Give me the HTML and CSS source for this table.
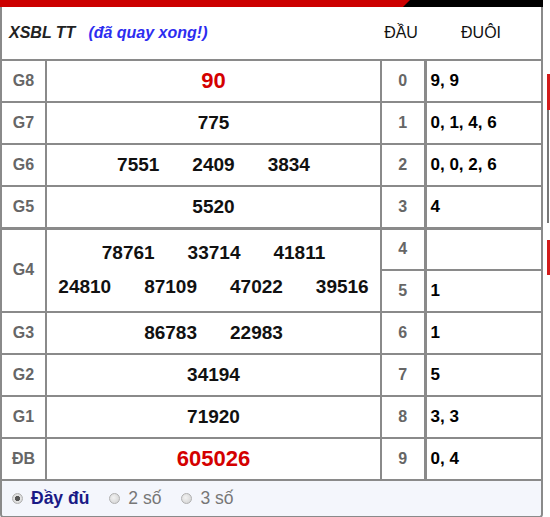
FILE: index.html
```html
<!DOCTYPE html>
<html lang="vi">
<head>
<meta charset="utf-8">
<title>XSBL TT</title>
<link rel="stylesheet" href="styles.css">
</head>
<body>
<div class="page">
  <div class="widget">
    <div class="topbar"><div class="topbar-end"></div></div>
    <div class="box">
      <table class="kq">
        <colgroup>
          <col class="c-lbl"><col class="c-num"><col class="c-dau"><col class="c-duoi">
        </colgroup>
        <thead>
          <tr class="head">
            <th colspan="2" class="title"><span class="name">XSBL TT</span><span class="status">(đã quay xong!)</span></th>
            <th class="h-dau">ĐẦU</th>
            <th class="h-duoi">ĐUÔI</th>
          </tr>
        </thead>
        <tbody>
          <tr><td class="lbl">G8</td><td class="num"><span class="red big">90</span></td><td class="dau">0</td><td class="duoi">9, 9</td></tr>
          <tr><td class="lbl">G7</td><td class="num">775</td><td class="dau">1</td><td class="duoi">0, 1, 4, 6</td></tr>
          <tr><td class="lbl">G6</td><td class="num"><div class="line"><span>7551</span><span>2409</span><span>3834</span></div></td><td class="dau">2</td><td class="duoi">0, 0, 2, 6</td></tr>
          <tr><td class="lbl">G5</td><td class="num">5520</td><td class="dau">3</td><td class="duoi">4</td></tr>
          <tr class="sep"><td class="lbl" rowspan="2">G4</td><td class="num" rowspan="2"><div class="line l1"><span>78761</span><span>33714</span><span>41811</span></div><div class="line"><span>24810</span><span>87109</span><span>47022</span><span>39516</span></div></td><td class="dau">4</td><td class="duoi"></td></tr>
          <tr><td class="dau">5</td><td class="duoi">1</td></tr>
          <tr><td class="lbl">G3</td><td class="num"><div class="line"><span>86783</span><span>22983</span></div></td><td class="dau">6</td><td class="duoi">1</td></tr>
          <tr><td class="lbl">G2</td><td class="num">34194</td><td class="dau">7</td><td class="duoi">5</td></tr>
          <tr><td class="lbl">G1</td><td class="num">71920</td><td class="dau">8</td><td class="duoi">3, 3</td></tr>
          <tr><td class="lbl">ĐB</td><td class="num"><span class="red big">605026</span></td><td class="dau">9</td><td class="duoi">0, 4</td></tr>
        </tbody>
      </table>
      <div class="opts">
        <label class="opt on"><input type="radio" name="mode" checked>Đầy đủ</label>
        <label class="opt"><input type="radio" name="mode">2 số</label>
        <label class="opt"><input type="radio" name="mode">3 số</label>
      </div>
    </div>
  </div>
  <div class="side">
    <span class="s-red"></span>
    <span class="s-grey"></span>
    <span class="s-red s-red2"></span>
  </div>
</div>
</body>
</html>
```
FILE: styles.css
```css
body {
  margin: 0;
  background: #fff;
  font-family: "Liberation Sans", Arial, sans-serif;
  color: #111;
}
.page {
  display: flex;
  align-items: flex-start;
  gap: 4px;
}
.widget {
  width: 543px;
}
.topbar {
  height: 7px;
  background: #cc0000;
  display: flex;
  justify-content: flex-end;
}
.topbar-end {
  width: 140px;
  background: #000;
  clip-path: polygon(7px 0, 100% 0, 100% 100%, 0 100%);
}
.box {
  border: 2px solid #8a8a8a;
  border-top: none;
  border-radius: 0 0 4px 4px;
  overflow: hidden;
}
.kq {
  width: 100%;
  border-collapse: collapse;
  table-layout: fixed;
}
.c-lbl { width: 44px; }
.c-num { width: 335px; }
.c-dau { width: 44px; }
.c-duoi { width: 116px; }

.kq tbody tr {
  height: 42px;
}
.kq td {
  border: 2px solid #8a8a8a;
  padding: 0;
  text-align: center;
  vertical-align: middle;
  font-weight: bold;
}
.kq tr.sep td {
  border-top-width: 3px;
}
.kq th {
  height: 52px;
  padding: 0;
  border-bottom: 2px solid #8a8a8a;
  vertical-align: middle;
}
.title {
  text-align: left;
  padding-left: 7px !important;
  font-style: italic;
  font-weight: bold;
  font-size: 16px;
}
.name {
  color: #222;
}
.status {
  color: #2d2df0;
  margin-left: 13px;
}
.h-dau, .h-duoi {
  font-size: 16px;
  font-weight: normal;
  color: #111;
  text-align: center;
}
.h-dau {
  padding-right: 4px !important;
}
.h-duoi {
  padding-right: 4px !important;
}
.kq td.lbl {
  border-left: none;
  color: #666;
  font-size: 16px;
}
.kq td.num {
  font-size: 19px;
  color: #111;
}
.kq td.dau {
  color: #666;
  font-size: 16px;
  border-right-width: 3px;
}
.kq td.duoi {
  border-right: none;
  text-align: left;
  padding-left: 4px;
  font-size: 17px;
  color: #000;
}
.line {
  display: flex;
  justify-content: center;
  gap: 33px;
}
.line.l1 {
  margin-bottom: 12px;
}
.red {
  color: #d40000;
}
.big {
  font-size: 22px;
}
.opts {
  height: 35px;
  background: #f4f6fc;
  display: flex;
  align-items: center;
  padding-left: 10px;
  gap: 20px;
  font-size: 17.5px;
}
.opt {
  display: flex;
  align-items: center;
  gap: 8px;
  color: #777;
}
.opt.on {
  color: #1a1a86;
  font-weight: bold;
}
.opt input {
  appearance: none;
  -webkit-appearance: none;
  margin: 0;
  width: 11px;
  height: 11px;
  border-radius: 50%;
  border: 1px solid #b0b0b0;
  background: radial-gradient(circle at 40% 40%, #f2f2f2, #cfcfcf);
}
.opt input:checked {
  background: radial-gradient(circle, #555 0 2.3px, #e4e4e4 2.9px, #cccccc 100%);
}
.side {
  width: 3px;
  display: flex;
  flex-direction: column;
  padding-top: 74px;
}
.s-red {
  display: block;
  width: 3px;
  height: 36px;
  background: #d41b1b;
}
.s-grey {
  display: block;
  width: 2px;
  height: 113px;
  background: #777;
}
.s-red2 {
  margin-top: 17px;
  height: 35px;
}
```
